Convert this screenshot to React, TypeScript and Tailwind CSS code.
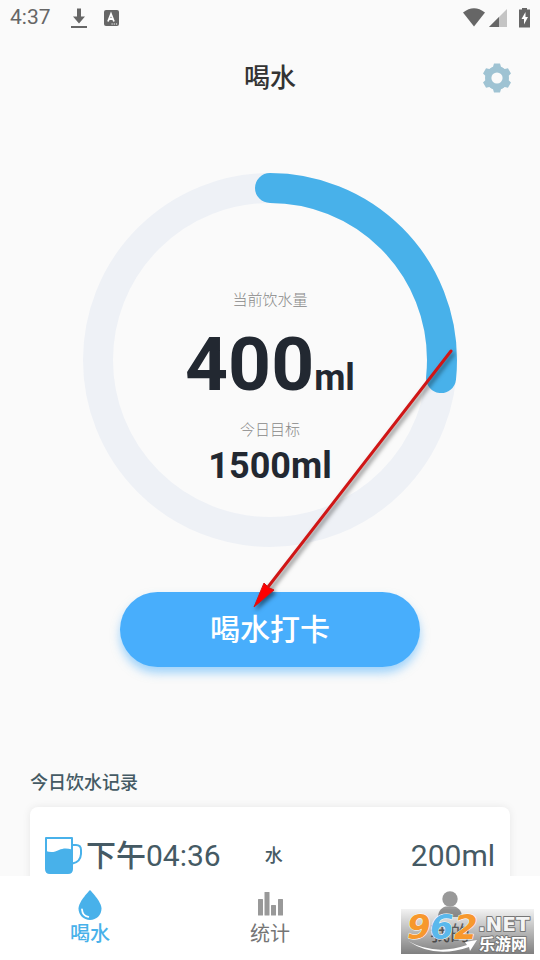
import { clsx } from 'clsx';

const CURRENT = 400;
const TARGET = 1500;

const records = [{ period: '下午', time: '04:36', drink: '水', amount: '200ml' }];

const tabs = [
  { label: '喝水', icon: <DropIcon />, active: true },
  { label: '统计', icon: <ChartIcon />, active: false },
  { label: '我的', icon: <PersonIcon />, active: false },
];

function DropIcon() {
  return (
    <svg width="24" height="30" viewBox="0 0 24 30" aria-hidden="true">
      <path d="M12 0C12 0 0.5 11.5 0.5 18.5C0.5 25 5.5 30 12 30S23.5 25 23.5 18.5C23.5 11.5 12 0 12 0Z" fill="currentColor" />
      <path d="M4 19.5C4.3 23.5 7 26.3 10.3 26.8" fill="none" stroke="#fff" strokeWidth="1.8" strokeLinecap="round" />
    </svg>
  );
}

function ChartIcon() {
  return (
    <svg width="26" height="30" viewBox="0 0 26 30" fill="currentColor" aria-hidden="true">
      <rect x="1" y="9" width="5" height="16.5" rx="0.5" />
      <rect x="7.5" y="2" width="5" height="23.5" rx="0.5" />
      <rect x="14" y="15" width="5" height="10.5" rx="0.5" />
      <rect x="21" y="9" width="5" height="16.5" rx="0.5" />
    </svg>
  );
}

function PersonIcon() {
  return (
    <svg width="24" height="30" viewBox="0 0 24 30" fill="currentColor" aria-hidden="true">
      <circle cx="12" cy="9" r="7.7" />
      <path d="M0 27C0 20 5 17 8 16.5H16C19 17 24 20 24 27Z" />
    </svg>
  );
}

function GearIcon() {
  return (
    <svg width="30" height="30" viewBox="0 0 30 30" aria-hidden="true">
      <g fill="#9fc3d3">
        <circle cx="15" cy="15" r="11.6" />
        {[0, 60, 120].map((angle) => (
          <path
            key={angle}
            transform={`rotate(${angle} 15 15)`}
            d="M8.8 5L11 3.8L12 0.6H18L19 3.8L21.2 5V25L19 26.200L18 29.4H12L11 26.200L8.8 25Z"
          />
        ))}
      </g>
      <circle cx="15" cy="15" r="5.6" fill="#fafafa" />
    </svg>
  );
}

function MugIcon() {
  return (
    <svg width="38" height="38" viewBox="0 0 38 38" fill="none" aria-hidden="true">
      <path d="M27.5 8H31Q36 8 36 13V17Q35.5 25 27.5 26.5" stroke="#48b1ea" strokeWidth="2" />
      <path d="M1 1H27V32Q27 36 23 36H5Q1 36 1 32Z" fill="#fff" stroke="#48b1ea" strokeWidth="2" strokeLinejoin="round" />
      <path d="M1 14C6 16 10 15 14 13S22 11 27 12.5V32Q27 36 23 36H5Q1 36 1 32Z" fill="#48b1ea" />
    </svg>
  );
}

function StatusBar() {
  return (
    <div className="flex h-9 shrink-0 items-center justify-between pr-2 pl-2.5 text-[#666]">
      <div className="flex items-center gap-5">
        <span className="text-[21px]">4:37</span>
        <div className="flex items-center gap-4">
          <svg width="16" height="22" viewBox="0 0 16 22" fill="currentColor" aria-hidden="true">
            <path d="M6 1.5H10V9.5H14L8 16.5L2 9.5H6Z" />
            <rect x="0" y="19" width="16" height="2" />
          </svg>
          <svg width="16" height="16" viewBox="0 0 16 16" aria-hidden="true">
            <rect x="1" y="0" width="15" height="16" rx="2" fill="currentColor" />
            <path d="M5 11.5L8 4L11 11.5M6.2 9H9.8" fill="none" stroke="#fff" strokeWidth="1.8" />
            <path d="M8.5 14H14.5" stroke="#fff" strokeWidth="1.2" strokeDasharray="1.2 1" />
          </svg>
        </div>
      </div>
      <svg width="69" height="20" viewBox="0 0 69 20" fill="currentColor" aria-hidden="true">
        <path d="M0 4.5Q11 -4 22 4.5L11 18.5Z" />
        <path d="M44 1V19H26Z" fill="#c4c4c4" />
        <path d="M36 9V19H26Z" />
        <path d="M59 0H64V1.5H67V19.5H56V1.5H59Z" />
        <path d="M62.5 4L58.5 11H61V16.5L65 9H62.5Z" fill="#fff" />
      </svg>
    </div>
  );
}

function ProgressRing({ ratio }: { ratio: number }) {
  const length = 2 * Math.PI * 172;

  return (
    <svg className="col-start-1 row-start-1" width="374" height="374" viewBox="0 0 374 374" fill="none" aria-hidden="true">
      <circle cx="187" cy="187" r="172" stroke="#eef1f6" strokeWidth="30" />
      <circle
        cx="187"
        cy="187"
        r="172"
        stroke="#48b1ea"
        strokeWidth="30"
        strokeLinecap="round"
        strokeDasharray={`${length * ratio} ${length}`}
        transform="rotate(-90 187 187)"
      />
    </svg>
  );
}

function GuideArrow() {
  return (
    <svg
      className="pointer-events-none absolute top-[170px] left-1/2 -ml-5 drop-shadow-[2px_3px_2px_rgba(0,0,0,0.5)]"
      width="210"
      height="270"
      viewBox="0 0 210 270"
      aria-hidden="true"
    >
      <path d="M201 8L18 244" stroke="#d01616" strokeWidth="3" strokeLinecap="round" />
      <path d="M4 264L14 240L18.5 244.5L24 247Z" fill="#fe0000" stroke="#d01616" strokeWidth="1" />
    </svg>
  );
}

function Watermark() {
  return (
    <div className="pointer-events-none absolute right-1.5 bottom-1.5 bg-linear-to-b from-black/5 to-black/50">
      <svg width="133" height="45" viewBox="0 0 133 45" className="overflow-visible">
        <path d="M7 32Q34 47 66 36L64 33L76 31L69 42L68 38Q34 50 7 32Z" fill="#fff" />
        <g fontFamily="DejaVu Sans" fontWeight="bold" paintOrder="stroke" strokeLinejoin="round">
          <g fontSize="34" fontStyle="italic" stroke="#fff" strokeWidth="1">
            <text x="6" y="30" fill="#f7982d">9</text>
            <text x="29" y="30" fill="#5ab8ec">6</text>
            <text x="53" y="30" fill="#f7982d">2</text>
          </g>
          <text x="77" y="22" fontSize="20" fill="#f4f4f4" stroke="#777" strokeWidth="2">.NET</text>
        </g>
        <text
          x="78"
          y="41"
          fontSize="16"
          fontWeight="bold"
          fontFamily="Noto Sans CJK SC"
          fill="#fff"
          stroke="#777"
          strokeWidth="2"
          strokeLinejoin="round"
          paintOrder="stroke"
        >
          乐游网
        </text>
      </svg>
    </div>
  );
}

export default function App() {
  return (
    <div className="relative flex h-screen flex-col overflow-hidden bg-[#fafafa] font-['Roboto','Noto_Sans_CJK_SC',sans-serif]">
      <StatusBar />

      <header className="grid h-[84px] shrink-0 grid-cols-[1fr_auto_1fr] items-center px-7">
        <h1 className="col-start-2 text-[26px] font-medium text-[#333]">喝水</h1>
        <button type="button" aria-label="设置" className="justify-self-end">
          <GearIcon />
        </button>
      </header>

      <main className="min-h-0 flex-1 overflow-hidden px-[30px] pt-[53px]">
        <div className="relative flex flex-col items-center">
          <div className="grid place-items-center">
            <ProgressRing ratio={CURRENT / TARGET} />
            <div className="col-start-1 row-start-1 flex flex-col items-center pt-[54px] text-[#222831]">
              <p className="text-[15px] leading-6 font-light text-[#888]">当前饮水量</p>
              <p className="mt-3 text-[75px] leading-[80px] font-bold">
                {CURRENT}
                <span className="text-4xl">ml</span>
              </p>
              <p className="mt-3.5 text-[15px] leading-6 font-light text-[#888]">今日目标</p>
              <p className="mt-1 text-4xl font-bold">{TARGET}ml</p>
            </div>
          </div>

          <button
            type="button"
            className="mt-[45px] h-[75px] w-[300px] rounded-full bg-[#48aefc] text-3xl font-medium text-white shadow-[0_6px_10px_rgba(72,174,252,0.5)]"
          >
            喝水打卡
          </button>
          <GuideArrow />
        </div>

        <section className="mt-[104px]">
          <h2 className="text-lg leading-6 font-medium text-[#455a64]">今日饮水记录</h2>
          <ul className="mt-3 rounded-lg bg-white px-[15px] py-[30px] shadow-[0_0_8px_rgba(0,0,0,0.08)]">
            {records.map((record) => (
              <li key={record.time} className="flex h-[38px] items-center text-3xl text-[#455a64]">
                <MugIcon />
                <span className="ml-[3px]">
                  <span className="font-medium">{record.period}</span>
                  {record.time}
                </span>
                <span className="ml-11 text-lg font-medium">{record.drink}</span>
                <span className="ml-auto">{record.amount}</span>
              </li>
            ))}
          </ul>
        </section>
      </main>

      <nav className="grid h-[84px] shrink-0 grid-cols-3 bg-white">
        {tabs.map((tab) => (
          <button
            key={tab.label}
            type="button"
            className={clsx('flex flex-col items-center pt-3.5', tab.active ? 'font-medium text-[#48b1ea]' : 'text-[#999]')}
          >
            {tab.icon}
            <span className={clsx('text-xl leading-7', !tab.active && 'text-[#757575]')}>{tab.label}</span>
          </button>
        ))}
      </nav>

      <Watermark />
    </div>
  );
}
